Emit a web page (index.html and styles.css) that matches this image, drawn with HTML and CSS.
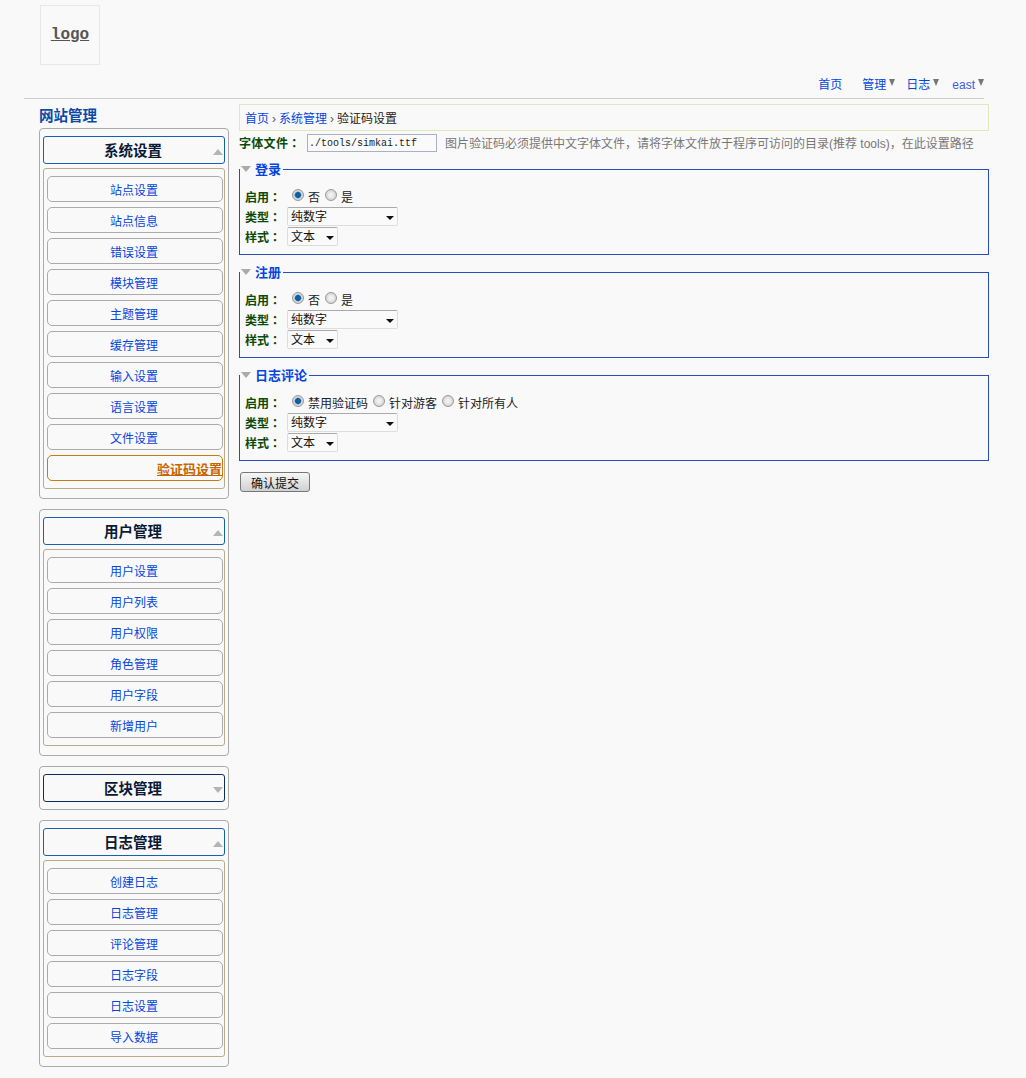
FILE: index.html
```html
<!DOCTYPE html>
<html lang="en">
<head>
    <meta charset="UTF-8">
    <meta name="viewport" content="width=device-width, initial-scale=1.0">
    <title>验证码设置</title>
    <link rel="stylesheet" href="styles.css">
</head>
<body>
    <div class="header">
        <a class="logo" href="#">logo</a>
        <div class="topnav">
            <a class="nav-home" href="#">首页</a>
            <a class="nav-drop nav-admin" href="#">管理</a>
            <a class="nav-drop nav-log" href="#">日志</a>
            <a class="nav-drop nav-user" href="#">east</a>
        </div>
    </div>

    <div class="wrap">
        <div class="sidebar">
            <div class="side-title">网站管理</div>

            <div class="group">
                <h3 class="group-head">系统设置<i class="arrow-up"></i></h3>
                <div class="group-body">
                    <a class="item" href="#">站点设置</a>
                    <a class="item" href="#">站点信息</a>
                    <a class="item" href="#">错误设置</a>
                    <a class="item" href="#">模块管理</a>
                    <a class="item" href="#">主题管理</a>
                    <a class="item" href="#">缓存管理</a>
                    <a class="item" href="#">输入设置</a>
                    <a class="item" href="#">语言设置</a>
                    <a class="item" href="#">文件设置</a>
                    <a class="item active" href="#">验证码设置</a>
                </div>
            </div>

            <div class="group">
                <h3 class="group-head">用户管理<i class="arrow-up"></i></h3>
                <div class="group-body">
                    <a class="item" href="#">用户设置</a>
                    <a class="item" href="#">用户列表</a>
                    <a class="item" href="#">用户权限</a>
                    <a class="item" href="#">角色管理</a>
                    <a class="item" href="#">用户字段</a>
                    <a class="item" href="#">新增用户</a>
                </div>
            </div>

            <div class="group closed">
                <h3 class="group-head">区块管理<i class="arrow-down"></i></h3>
            </div>

            <div class="group">
                <h3 class="group-head">日志管理<i class="arrow-up"></i></h3>
                <div class="group-body">
                    <a class="item" href="#">创建日志</a>
                    <a class="item" href="#">日志管理</a>
                    <a class="item" href="#">评论管理</a>
                    <a class="item" href="#">日志字段</a>
                    <a class="item" href="#">日志设置</a>
                    <a class="item" href="#">导入数据</a>
                </div>
            </div>
        </div>

        <div class="main">
            <div class="crumb">
                <a href="#">首页</a><span class="sep">›</span><a href="#">系统管理</a><span class="sep">›</span>验证码设置
            </div>

            <form>
                <div class="font-row">
                    <label class="font-label">字体文件<span class="colon">：</span></label>
                    <input class="font-input" type="text" value="./tools/simkai.ttf">
                    <span class="hint">图片验证码必须提供中文字体文件，请将字体文件放于程序可访问的目录(推荐 tools)，在此设置路径</span>
                </div>

                <fieldset class="box">
                    <legend><i class="arrow-legend"></i>登录</legend>
                    <div class="row radios">
                        <label class="row-label">启用<span class="colon">：</span></label>
                        <input type="radio" name="login" checked><span class="opt">否</span>
                        <input type="radio" name="login"><span class="opt">是</span>
                    </div>
                    <div class="row">
                        <label class="row-label">类型<span class="colon">：</span></label>
                        <span class="sel sel-wide"><select><option>纯数字</option></select></span>
                    </div>
                    <div class="row">
                        <label class="row-label">样式<span class="colon">：</span></label>
                        <span class="sel sel-small"><select><option>文本</option></select></span>
                    </div>
                </fieldset>

                <fieldset class="box">
                    <legend><i class="arrow-legend"></i>注册</legend>
                    <div class="row radios">
                        <label class="row-label">启用<span class="colon">：</span></label>
                        <input type="radio" name="reg" checked><span class="opt">否</span>
                        <input type="radio" name="reg"><span class="opt">是</span>
                    </div>
                    <div class="row">
                        <label class="row-label">类型<span class="colon">：</span></label>
                        <span class="sel sel-wide"><select><option>纯数字</option></select></span>
                    </div>
                    <div class="row">
                        <label class="row-label">样式<span class="colon">：</span></label>
                        <span class="sel sel-small"><select><option>文本</option></select></span>
                    </div>
                </fieldset>

                <fieldset class="box">
                    <legend><i class="arrow-legend"></i>日志评论</legend>
                    <div class="row radios">
                        <label class="row-label">启用<span class="colon">：</span></label>
                        <input type="radio" name="comment" checked><span class="opt">禁用验证码</span>
                        <input type="radio" name="comment"><span class="opt">针对游客</span>
                        <input type="radio" name="comment"><span class="opt">针对所有人</span>
                    </div>
                    <div class="row">
                        <label class="row-label">类型<span class="colon">：</span></label>
                        <span class="sel sel-wide"><select><option>纯数字</option></select></span>
                    </div>
                    <div class="row">
                        <label class="row-label">样式<span class="colon">：</span></label>
                        <span class="sel sel-small"><select><option>文本</option></select></span>
                    </div>
                </fieldset>

                <button class="submit" type="button">确认提交</button>
            </form>
        </div>
    </div>
</body>
</html>
```

FILE: styles.css
```css
body {
    background-color: #f9f9f9;
    margin: 0;
    font-family: "Liberation Sans", "Noto Sans CJK SC", sans-serif;
    font-size: 12px;
    color: #222;
}

a {
    color: #0645dd;
    text-decoration: none;
}

.header {
    width: 960px;
    height: 98px;
    margin-left: 24px;
    border-bottom: 1px solid #ccc;
    display: flex;
    flex-direction: column;
}

.logo {
    width: 58px;
    height: 58px;
    margin: 5px 0 0 16px;
    border: 1px solid #e8e8e8;
    display: flex;
    align-items: center;
    justify-content: center;
    font-family: "Liberation Mono", monospace;
    font-size: 16px;
    font-weight: bold;
    color: #555;
    text-decoration: underline;
}

.topnav {
    display: flex;
    justify-content: flex-end;
    margin-top: 11px;
    line-height: 18px;
}

.nav-home {
    margin-right: 20px;
}

.nav-drop {
    display: flex;
    align-items: center;
}

.nav-drop::after {
    content: "";
    margin: -5px 0 0 3px;
    border-left: 3.5px solid transparent;
    border-right: 3.5px solid transparent;
    border-top: 7px solid #777;
}

.nav-admin {
    margin-right: 11px;
}

.nav-log {
    margin-right: 13px;
}

.nav-user {
    color: #3a5ce0;
}

.wrap {
    display: flex;
    gap: 10px;
    margin-left: 39px;
    padding-top: 5px;
}

.sidebar {
    width: 190px;
}

.side-title {
    height: 24px;
    line-height: 24px;
    font-size: 14.5px;
    font-weight: bold;
    color: #0b4aa8;
}

.group {
    border: 1px solid #aaa;
    border-radius: 4px;
    padding: 7px 3px 9px;
    margin-bottom: 10px;
}

.group.closed {
    padding-bottom: 7px;
}

.group-head {
    position: relative;
    box-sizing: border-box;
    height: 28px;
    margin: 0;
    border: 1px solid #1560b0;
    border-radius: 3px;
    line-height: 28px;
    text-align: center;
    font-size: 14.5px;
    font-weight: bold;
    color: #0a1a35;
    padding-right: 2px;
}

.closed .group-head {
    border-color: #0a2f60;
}

.arrow-up, .arrow-down {
    position: absolute;
    right: 1px;
    top: 12px;
    border-left: 5.5px solid transparent;
    border-right: 5.5px solid transparent;
}

.arrow-up {
    border-bottom: 6px solid #b4b4b4;
}

.arrow-down {
    border-top: 6px solid #b4b4b4;
}

.group-body {
    display: flex;
    flex-direction: column;
    gap: 5px;
    margin-top: 4px;
    padding: 7px 1px 7px 3px;
    border: 1px solid #b8ac8c;
    border-radius: 3px;
}

.item {
    box-sizing: border-box;
    height: 26px;
    padding: 1px 2px 0 0;
    line-height: 26px;
    border: 1px solid #aaa;
    border-radius: 5px;
    text-align: center;
}

.item.active {
    padding-right: 0;
    border-color: #c87a10;
    color: #c86400;
    font-size: 13px;
    font-weight: bold;
    text-align: right;
    text-decoration: underline;
}

.main {
    width: 750px;
}

.crumb {
    box-sizing: border-box;
    height: 27px;
    line-height: 29px;
    padding-left: 5px;
    border: 1px solid #dfe8bb;
}

.sep {
    margin: 0 3px;
    color: #556;
}

.font-row {
    display: flex;
    align-items: center;
    height: 18px;
    margin-top: 3px;
    margin-bottom: 10px;
}

.font-label, .row-label {
    font-weight: bold;
    color: #0a4a0a;
}

.font-label {
    width: 68px;
    padding-bottom: 2px;
    letter-spacing: 0.3px;
}

/* TC font keeps the full width colon centred in its cell */
.colon {
    font-family: "Noto Sans CJK TC", sans-serif;
}

.font-input {
    box-sizing: border-box;
    width: 130px;
    height: 18px;
    padding: 0 0 0 1px;
    border: 1px solid #a8b0c8;
    background: #fafafa;
    font-family: "Liberation Mono", monospace;
    font-size: 10px;
    color: #222;
}

.hint {
    margin-left: 8px;
    padding-bottom: 2px;
    color: #777;
    white-space: nowrap;
}

.box {
    margin: 0 0 10px;
    padding: 9px 5px 8px;
    border: 1px solid #2a4cc0;
    min-width: 0;
}

.box legend {
    display: flex;
    align-items: center;
    padding: 0 2px 0 1px;
    margin-left: -5px;
    height: 15px;
    line-height: 15px;
    font-size: 13px;
    font-weight: bold;
    color: #0645dd;
}

.arrow-legend {
    margin: 0 4px 2px 0;
    border-left: 5.5px solid transparent;
    border-right: 5.5px solid transparent;
    border-top: 6px solid #aaa;
}

.row {
    display: flex;
    align-items: center;
    height: 20px;
}

.row-label {
    width: 42px;
}

.radios input {
    appearance: none;
    box-sizing: border-box;
    width: 12px;
    height: 12px;
    margin: 0 4px 2px 5px;
    border: 1px solid #999;
    border-radius: 50%;
    background: radial-gradient(circle, #f0f0f0 25%, #c4c4c4 100%);
}

.radios input:checked {
    background: radial-gradient(circle, #0a6aa8 0, #0a5a98 35%, #dde 55%, #bbb 100%);
}

.sel {
    position: relative;
    display: inline-block;
    height: 19px;
}

.sel-wide {
    width: 111px;
}

.sel-small {
    width: 51px;
}

.sel::after {
    content: "";
    position: absolute;
    right: 4px;
    top: 9px;
    border-left: 4px solid transparent;
    border-right: 4px solid transparent;
    border-top: 4px solid #111;
}

.sel select {
    appearance: none;
    box-sizing: border-box;
    width: 100%;
    height: 100%;
    padding: 2px 0 0 3px;
    border: 1px solid #ddd;
    border-top-color: #aaa;
    border-radius: 2px;
    background: #fafafa;
    font-family: inherit;
    font-size: 12px;
    color: #111;
}

.submit {
    box-sizing: border-box;
    width: 70px;
    height: 20px;
    margin: 1px 0 0 1px;
    padding: 0;
    border: 1px solid #777;
    border-radius: 3px;
    background: linear-gradient(#f6f6f6, #d0d0d0);
    font-family: inherit;
    font-size: 12px;
    color: #111;
}
```
